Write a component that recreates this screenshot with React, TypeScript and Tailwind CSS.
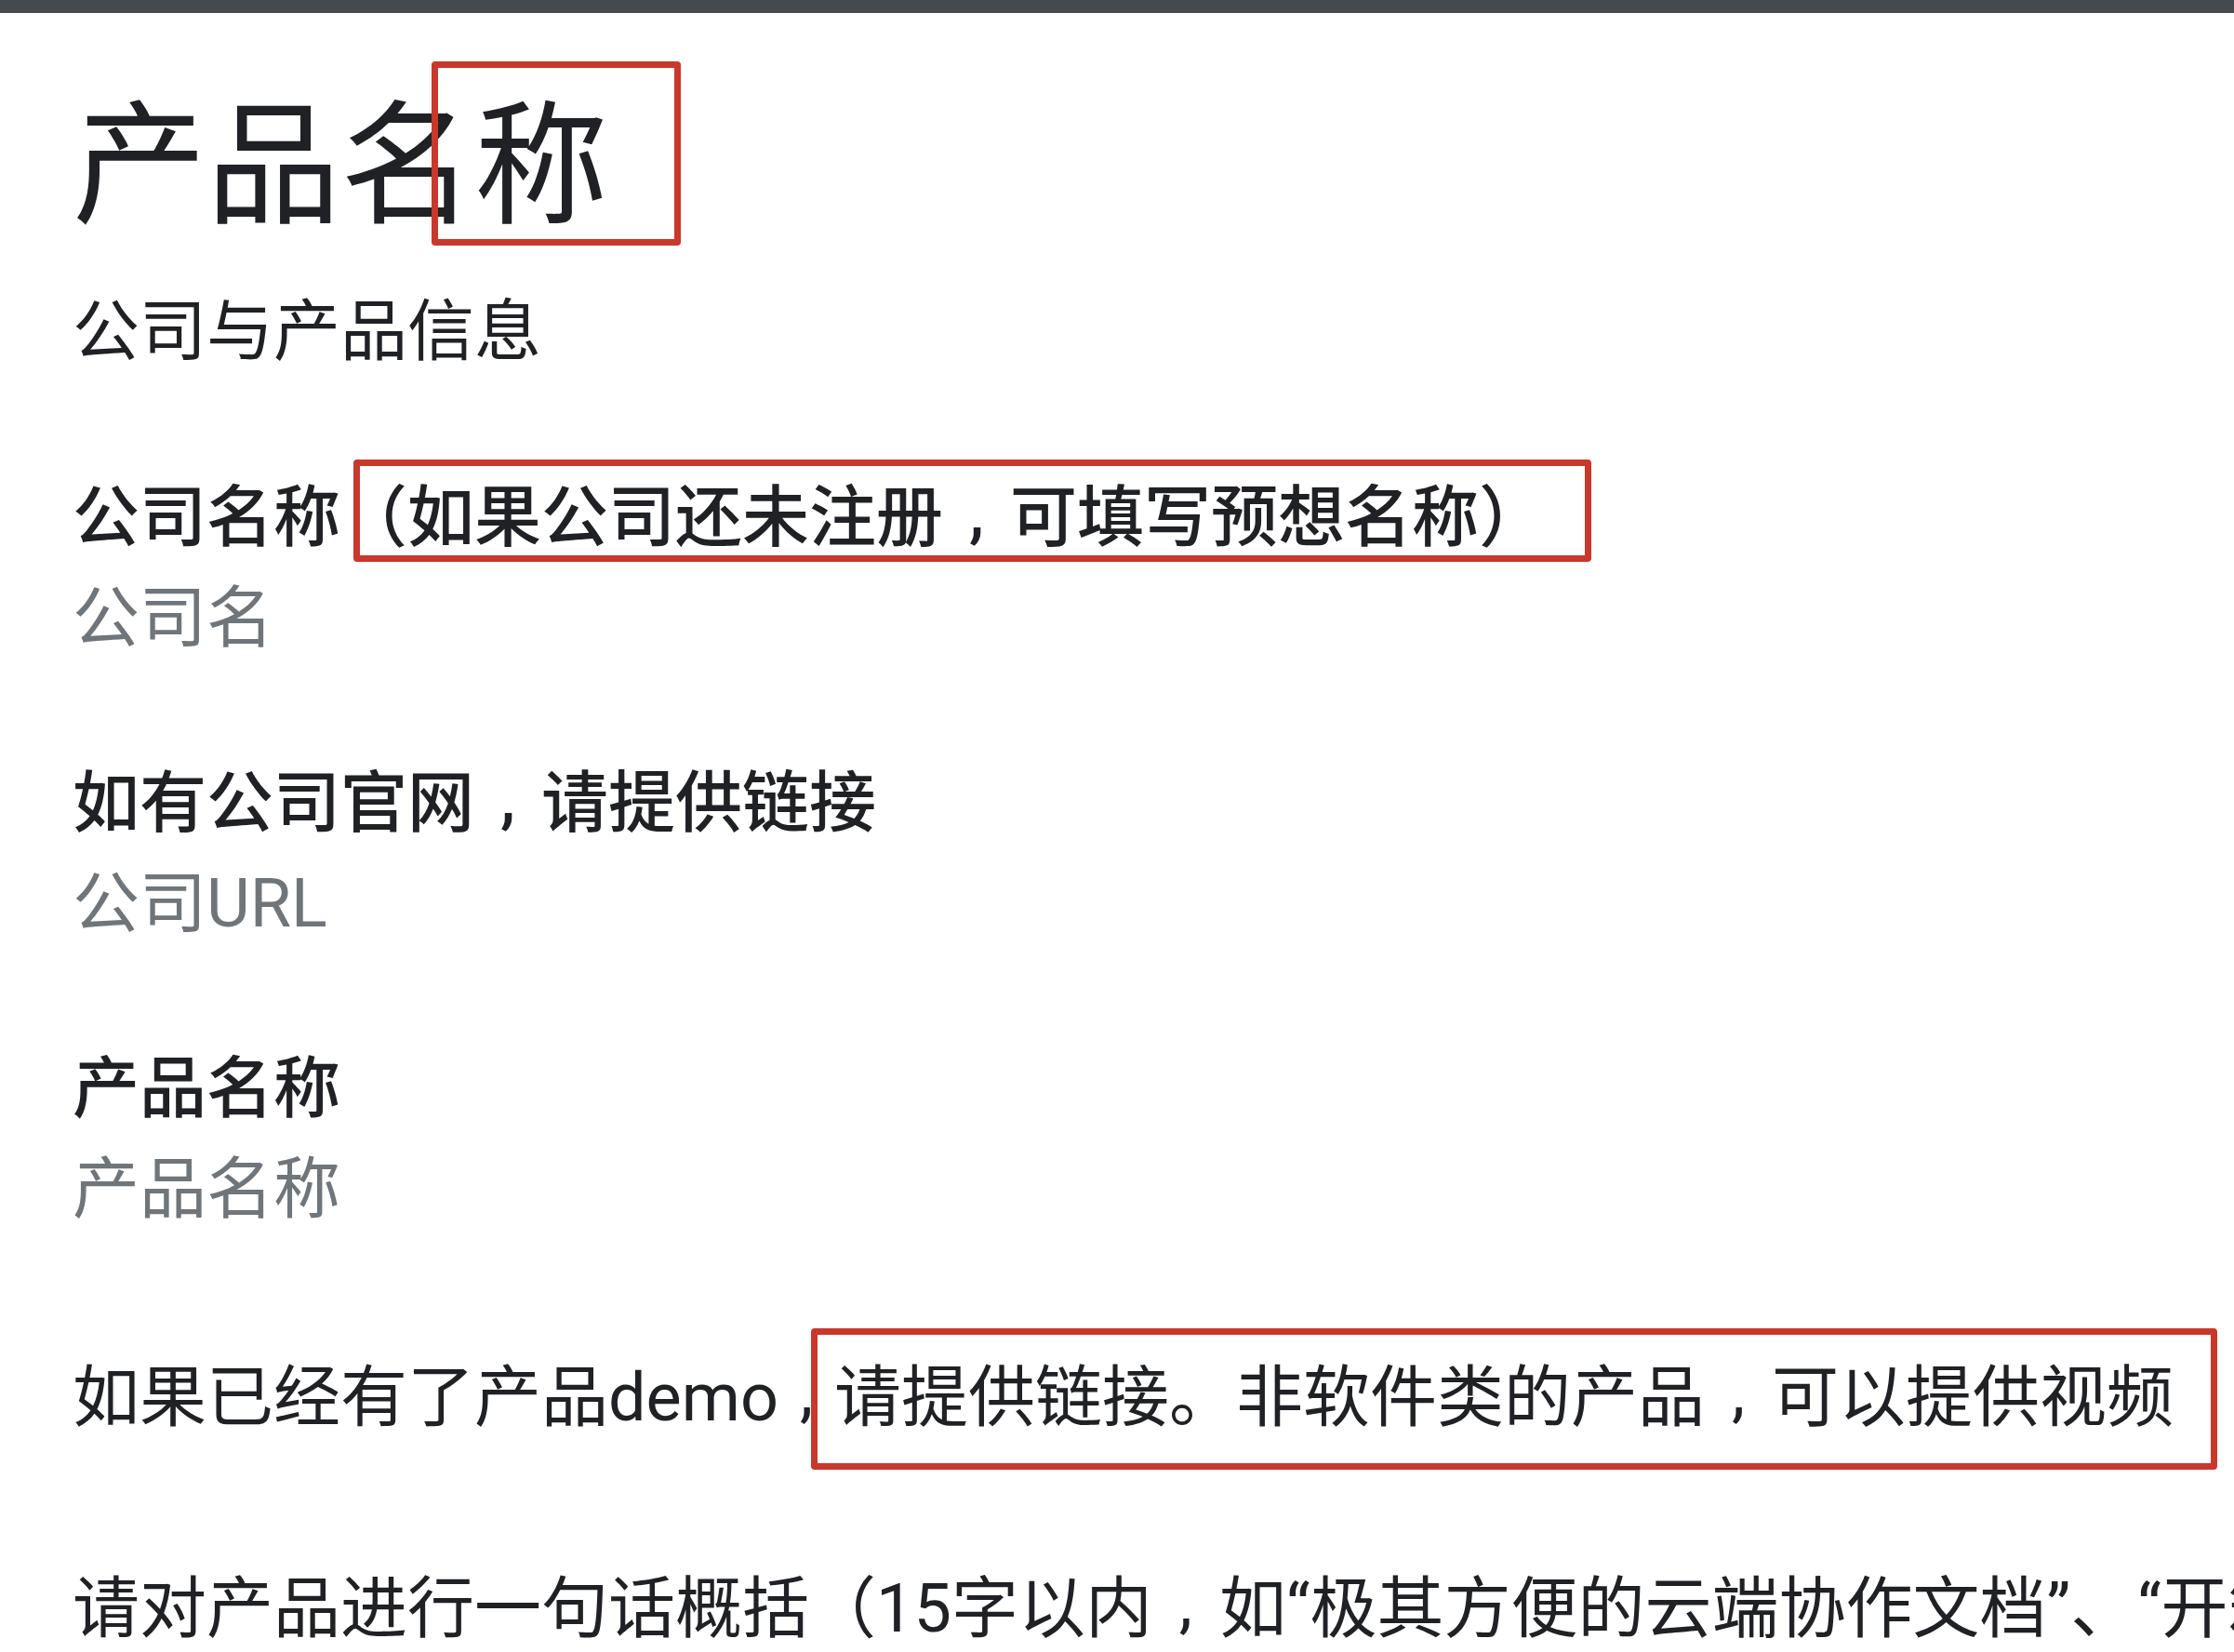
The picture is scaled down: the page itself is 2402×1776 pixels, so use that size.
import React from "react";

function Comma({ narrow = false }: { narrow?: boolean }) {
  return (
    <span className={`relative -top-[6px] inline-block text-center ${narrow ? "w-[60px]" : "w-[1em]"}`}>,</span>
  );
}

function Label({ children, bold = true }: { children: React.ReactNode; bold?: boolean }) {
  return (
    <div className={`text-[72px] leading-[108px] ${bold ? "font-medium" : "font-normal"}`}>
      {children}
    </div>
  );
}

function Placeholder({ children }: { children: React.ReactNode }) {
  return <div className="text-[72px] leading-[108px] text-[#70757a]">{children}</div>;
}

export default function App() {
  return (
    <div className="relative w-[2402px] h-[1776px] overflow-hidden bg-white text-[#202124] font-[Roboto,'Noto_Sans_CJK_SC',sans-serif]">
      <div className="h-[14px] bg-[#46494d]" />
      <div className="pl-[78px] whitespace-nowrap">
        <h1 className="mt-[94px] text-[144px] leading-[144px] font-normal">产品名称</h1>
        <p className="mt-[51px] text-[72px] leading-[108px]">公司与产品信息</p>

        <div className="mt-[92px]">
          <Label>公司名称（如果公司还未注册<Comma />可填写预想名称）</Label>
          <Placeholder>公司名</Placeholder>
        </div>

        <div className="mt-[91px]">
          <Label>如有公司官网<Comma />请提供链接</Label>
          <Placeholder>公司URL</Placeholder>
        </div>

        <div className="mt-[91px]">
          <Label>产品名称</Label>
          <Placeholder>产品名称</Placeholder>
        </div>

        <div className="mt-[116px]">
          <Label bold={false}>
            如果已经有了产品demo<Comma narrow />请提供链接。非软件类的产品<Comma />可以提供视频
          </Label>
        </div>

        <div className="mt-[119px]">
          <Label bold={false}>
            请对产品进行一句话概括（15字以内<Comma />如“极其方便的云端协作文档”、“开箱即用的团队管理工具”）
          </Label>
        </div>
      </div>

      {/* annotation boxes */}
      <div className="absolute left-[464px] top-[66px] w-[268px] h-[198px] border-[7px] border-[#c8382b] rounded-[4px]" />
      <div className="absolute left-[380px] top-[494px] w-[1331px] h-[110px] border-[7px] border-[#c8382b] rounded-[4px]" />
      <div className="absolute left-[872px] top-[1428px] w-[1512px] h-[152px] border-[7px] border-[#c8382b] rounded-[4px]" />
    </div>
  );
}
